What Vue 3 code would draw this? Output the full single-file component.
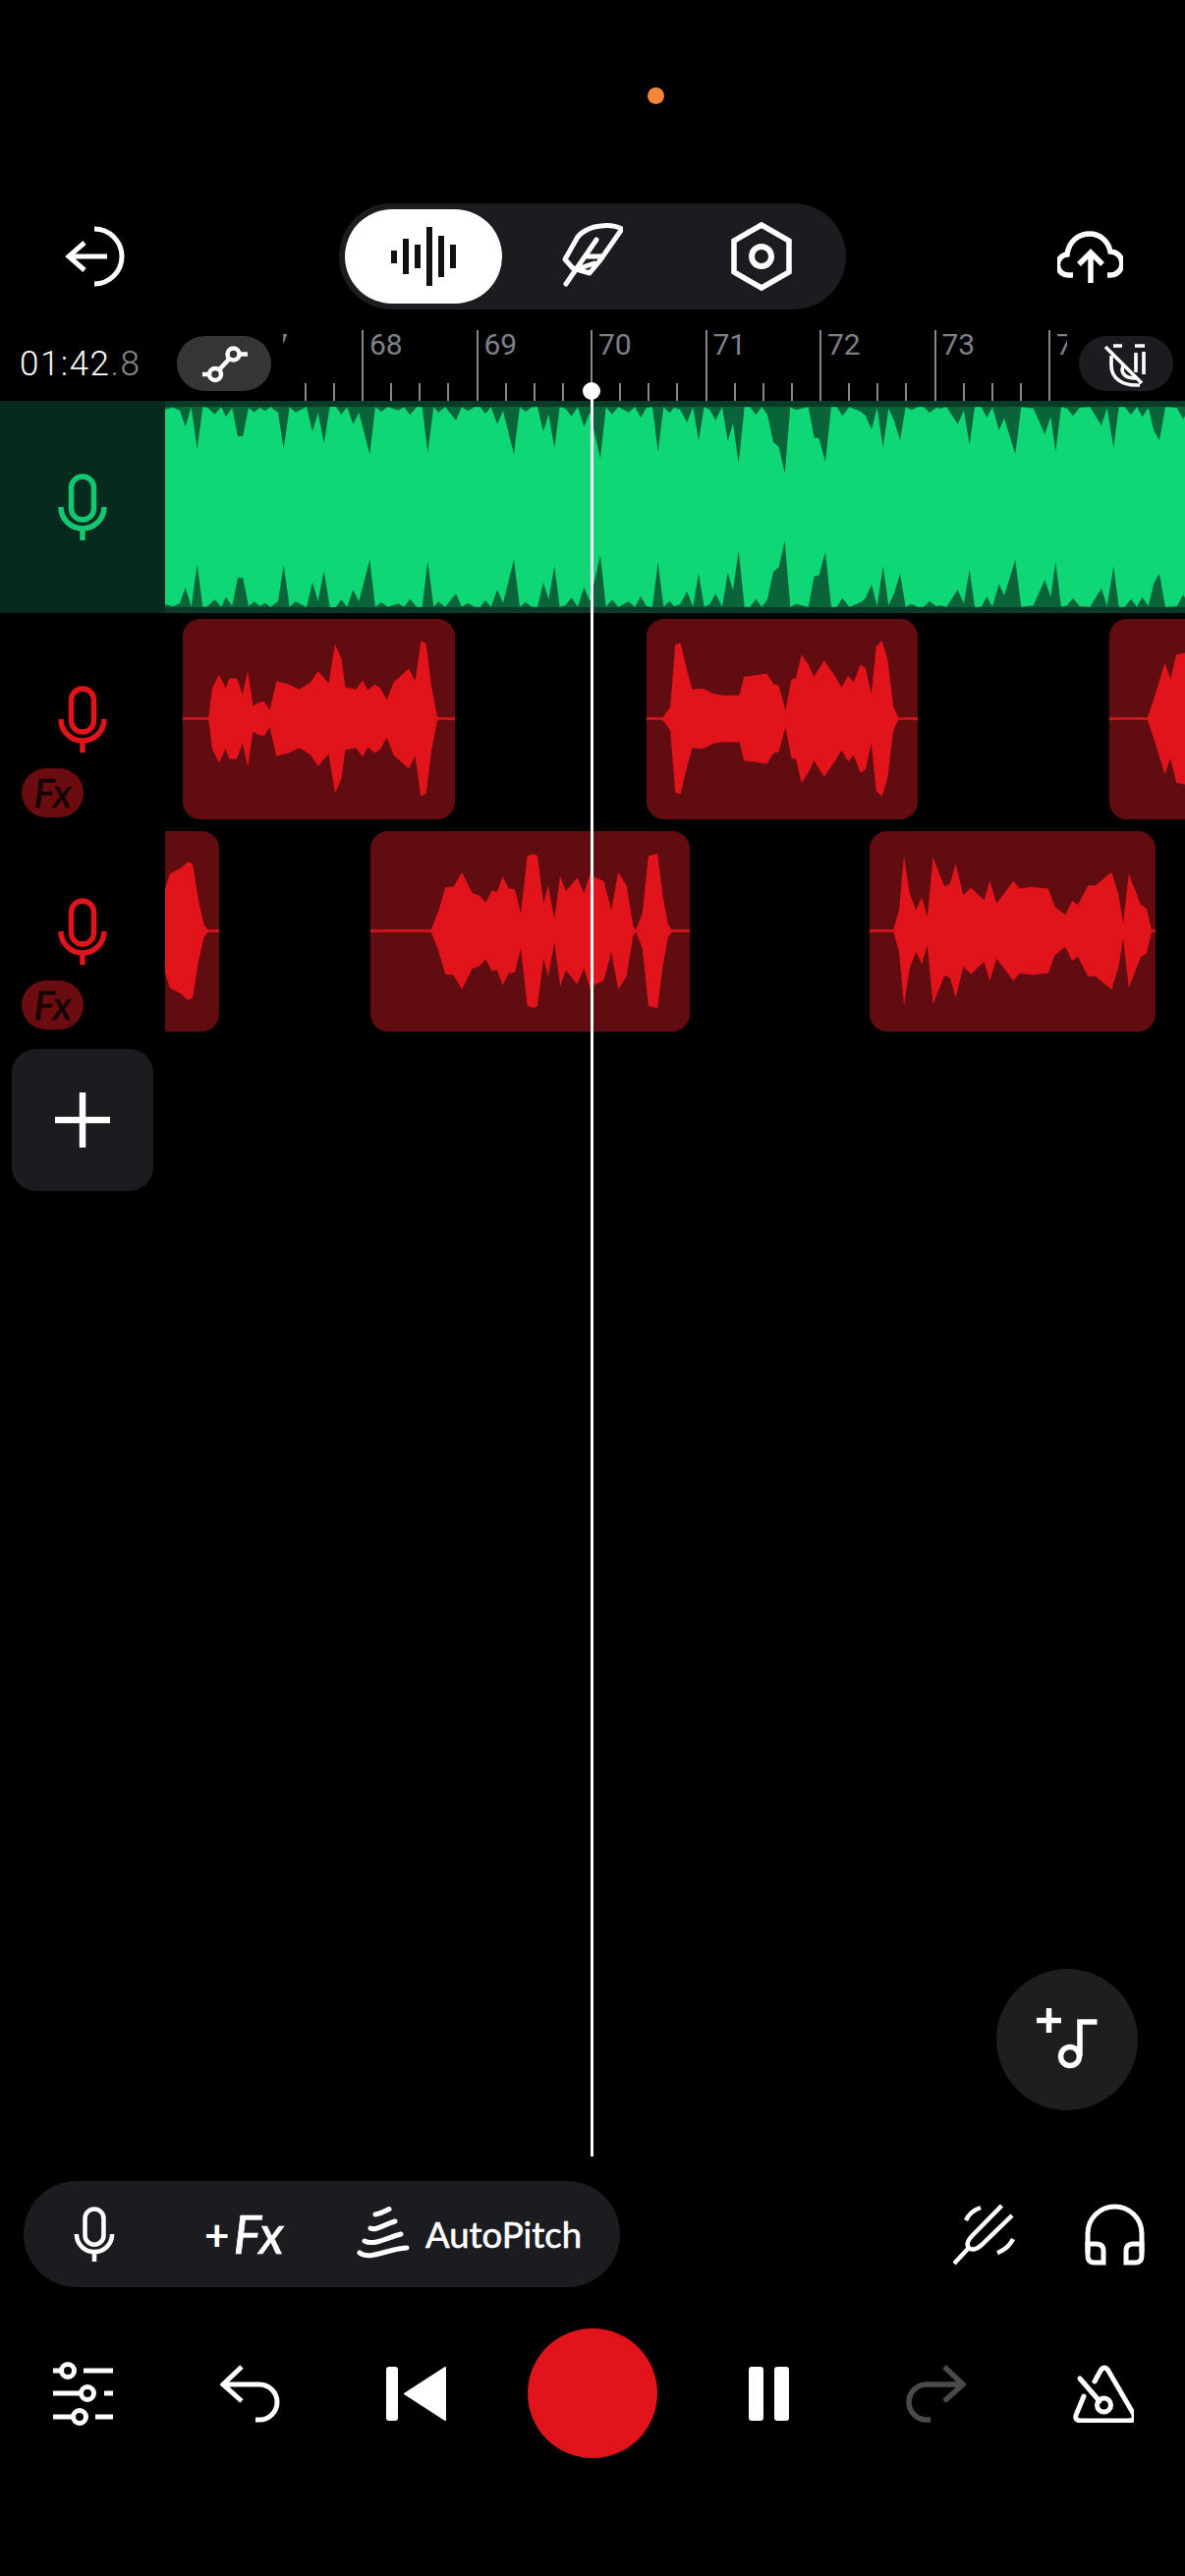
<template>
  <div class="screen">
    <!-- status bar, only the recording dot is visible -->
    <div class="status"><span class="rec-dot"></span></div>

    <header class="topbar">
      <svg class="back" width="62" height="62" viewBox="0 0 62 62" fill="none" stroke="#fff" stroke-width="5">
        <path d="M5 31H44M21 17L5 31L21 45" />
        <path d="M31 3A28 28 0 0 1 31 59" />
      </svg>
      <nav class="seg">
        <div class="tab active">
          <svg width="66" height="60" viewBox="0 0 66 60" fill="#111">
            <rect x="0" y="24" width="6" height="13" />
            <rect x="12" y="12" width="6" height="36" />
            <rect x="24" y="18" width="6" height="24" />
            <rect x="36" y="0" width="6" height="60" />
            <rect x="48" y="9" width="6" height="42" />
            <rect x="60" y="18" width="6" height="24" />
          </svg>
        </div>
        <div class="tab">
          <svg width="62" height="72" viewBox="22 14 62 72" fill="none" stroke="#fff" stroke-width="5" stroke-linecap="round" stroke-linejoin="round">
            <path d="M83 22Q72 16 55 20Q44 23 38 30L25 53L33 62L50 67L60 55Z" />
            <path d="M26 78L57 33M47 50H63M40 62L55 57" />
          </svg>
        </div>
        <div class="tab">
          <svg width="66" height="74" viewBox="0 0 66 74" fill="none" stroke="#fff" stroke-width="5.5">
            <path d="M33 5L61 21V53L33 69L5 53V21Z" />
            <circle cx="33" cy="37" r="10" stroke-width="6" />
          </svg>
        </div>
      </nav>
      <svg class="cloud" width="67" height="54" viewBox="0 0 67 54" fill="none" stroke="#fff" stroke-width="5.5">
        <path d="M16 46H12A10.5 10.5 0 0 1 10 25C12 11 22 4 33 4C44 4 52 12 54 22A12 12 0 0 1 54 46H51" />
        <path d="M34 54V24M22 35L34 23L46 35" />
      </svg>
    </header>

    <div class="rulerbar">
      <div class="time">01:42<span>.8</span></div>
      <div class="pill light">
        <svg width="50" height="40" viewBox="0 0 50 40" fill="none" stroke="#fff" stroke-width="4.5">
          <circle cx="34.5" cy="10.5" r="6" />
          <circle cx="16" cy="31" r="6" />
          <path d="M41 10.5H49M3 31H10M20 26.5L30.5 15" />
        </svg>
      </div>
      <div class="ruler">
        <div class="ruler-inner">
          <div v-for="n in beats" :key="n" class="beat">
            <span class="beat-no">{{ n }}</span>
            <div class="minors"><i></i><i></i><i></i><i></i></div>
          </div>
        </div>
      </div>
      <div class="pill">
        <svg width="52" height="52" viewBox="30 9 52 52" fill="none" stroke="#fff" stroke-width="3.6">
          <path d="M35 18L72 55M43 17H52M65 17H75M66 24V44M74 23V46" />
          <path d="M41 27V37C41 50 52 57 66 57H70M54 36C50 42 52 50 66 50" />
        </svg>
      </div>
    </div>

    <main class="stage">
      <section class="track green">
        <div class="head">
          <svg class="mic" width="50" height="68" viewBox="0 0 50 68" fill="none" stroke="currentColor" stroke-width="5.5">
            <rect x="13.5" y="3" width="23" height="44" rx="11.5" />
            <path d="M3 34A22 22 0 0 0 47 34M25 56V68" />
          </svg>
        </div>
        <div class="lane lane-green">
          <svg class="master" width="1038" height="204" viewBox="0 0 1038 204">
            <path :d="masterPath" fill="#0fd776" />
          </svg>
        </div>
      </section>

      <section v-for="row in redTracks" :key="row.id" class="track">
        <div class="head red">
          <svg class="mic" width="50" height="68" viewBox="0 0 50 68" fill="none" stroke="currentColor" stroke-width="5.5">
            <rect x="13.5" y="3" width="23" height="44" rx="11.5" />
            <path d="M3 34A22 22 0 0 0 47 34M25 56V68" />
          </svg>
          <span class="fx-badge">Fx</span>
        </div>
        <div class="lane">
          <div
            v-for="clip in row.clips"
            :key="clip.left"
            class="clip"
            :style="{ left: clip.left + 'px', width: clip.width + 'px' }"
          >
            <svg :width="clip.width" height="204" :viewBox="`0 0 ${clip.width} 204`">
              <rect x="0" y="100" :width="clip.width" height="3" fill="#c8141a" />
              <path :d="clipPath(clip.peaks)" fill="#e0141a" />
            </svg>
          </div>
        </div>
      </section>

      <button class="add">
        <svg width="58" height="58" viewBox="0 0 58 58" stroke="#fff" stroke-width="6.5">
          <path d="M1 29H57M29 1V57" />
        </svg>
      </button>

      <button class="fab">
        <svg width="144" height="144" viewBox="0 0 144 144" fill="none" stroke="#fff" stroke-width="5.5">
          <path d="M41 52.5H66M53.5 40V65" />
          <path d="M102.5 54H85V89" />
          <circle cx="75" cy="89" r="9.5" />
        </svg>
      </button>
    </main>

    <div class="tools">
      <div class="tool-pill">
        <svg class="tool-mic" width="42" height="56" viewBox="0 0 50 68" fill="none" stroke="#fff" stroke-width="5.5">
          <rect x="13.5" y="3" width="23" height="44" rx="11.5" />
          <path d="M3 34A22 22 0 0 0 47 34M25 56V68" />
        </svg>
        <span class="add-fx"><span>+</span><em>Fx</em></span>
        <svg class="pitch-icon" width="56" height="60" viewBox="12 8 56 60" fill="none" stroke="#fff" stroke-width="5" stroke-linecap="round">
          <path d="M32 18C38 17 41 15 46 12.5" />
          <path d="M27 32C33 35 41 28 52 25" />
          <path d="M21 45C30 50 43 42 58 38" />
          <path d="M16 57C27 65 43 53 64 52" />
        </svg>
        <span class="pitch-label">AutoPitch</span>
      </div>
      <div class="tool-right">
        <svg width="63" height="64" viewBox="0 0 63 64" fill="none" stroke="#fff" stroke-width="4.5">
          <path d="M1 62L15 47M49.5 3L20 33Q12 41 16 46Q21 50 29 43L60 13" />
          <path d="M13 18Q17 9 28 5M45 51Q56 47 61 37" />
        </svg>
        <svg width="61" height="63" viewBox="0 0 61 63" fill="none" stroke="#fff" stroke-width="5">
          <path d="M3 50V30.5A27.5 27.5 0 0 1 58 30.5V50" />
          <path d="M3 41H12Q19 41 19 48V60H10Q3 60 3 53Z" />
          <path d="M58 41H49Q42 41 42 48V60H51Q58 60 58 53Z" />
        </svg>
      </div>
    </div>

    <footer class="transport">
      <svg width="61" height="65" viewBox="0 0 61 65" fill="none" stroke="#fff" stroke-width="5">
        <path d="M0 9H8M31 9H61M0 32H28M52 32H61M0 56H20M43 56H61" />
        <circle cx="15" cy="9" r="6.5" />
        <circle cx="35" cy="32" r="6.5" />
        <circle cx="27" cy="56" r="6.5" />
      </svg>
      <svg width="61" height="60" viewBox="0 0 61 60" fill="none" stroke="#fff" stroke-width="5">
        <path d="M22 3L3 21L22 38M3 21H40A18 18 0 0 1 40 57H36" />
      </svg>
      <svg width="61" height="55" viewBox="0 0 61 55" fill="#fff" stroke="#fff" stroke-width="2" stroke-linejoin="round">
        <rect x="1" y="1" width="10" height="53" rx="2" />
        <path d="M19 27.5L60 1V54Z" />
      </svg>
      <button class="record"></button>
      <svg width="41" height="55" viewBox="0 0 41 55" fill="#fff">
        <rect x="0" y="0" width="15" height="55" rx="3" />
        <rect x="26" y="0" width="15" height="55" rx="3" />
      </svg>
      <svg width="61" height="60" viewBox="0 0 61 60" fill="none" stroke="#4a4a4a" stroke-width="5.5">
        <path d="M39 3L58 21L39 38M58 21H21A18 18 0 0 0 21 57H25" />
      </svg>
      <svg width="62" height="60" viewBox="10 10 62 60" fill="none" stroke="#fff" stroke-width="5" stroke-linecap="round">
        <path d="M21 43L14 60Q10 68 19 68H66Q75 68 71 60L46 17Q42 11 38 17L32 28" />
        <path d="M17 25L37 48" />
        <circle cx="41.5" cy="52" r="7" />
      </svg>
    </footer>

    <div class="playhead"><span class="playhead-dot"></span></div>
  </div>
</template>

<script setup>
const beats = [67, 68, 69, 70, 71, 72, 73, 74];

// top edge of the green master take, read off the screenshot in 3x pixels
const masterLeft = [0,35,25,30,45,38,62,88,80,28,98,158,115,28,130,30,152,50,172,28,186,58,205,30,222,118,238,116,255,30,272,44,290,30,305,40,322,28,345,45,362,156,380,28,398,44,432,27,450,103,467,45,485,138,503,27,522,27,538,50,556,28,574,80,592,45,625,172,642,28,660,42,680,28,712,38,730,28,748,52,768,28,785,28,802,168,820,28,835,44,855,28,888,68,906,28,925,40,945,28,962,28,978,48,995,28,1014,80,1032,40,1065,172,1083,28,1100,42,1120,28,1137,28,1155,103,1171,50,1189,152,1205,28,1222,32,1241,56,1260,28,1279,88,1297,45,1329,185,1346,28,1365,50,1384,28,1415,44,1435,28,1452,60,1470,30,1488,28,1505,165,1522,28,1540,46];
const masterRight = [0,30,18,35,40,75,58,28,75,130,92,28,108,35,127,68,147,28,164,132,180,78,197,200,215,28,232,28,250,52,268,28,285,50,303,135,320,150,338,230,355,28,372,37,410,28,428,122,442,122,462,195,480,28,497,28,514,55,535,28,570,42,585,55,603,97,620,30,638,152,655,32,672,70,690,130,707,28,725,37,745,28,762,28,780,45,800,30,815,32,832,28,866,80,885,38,902,143,918,28,938,28,955,60,972,28,992,98,1008,62,1042,172,1060,28,1097,32,1132,110,1150,58,1165,165,1182,28,1200,32,1218,55,1238,30,1270,28,1305,85,1322,30,1342,152,1358,28,1376,28,1395,52,1413,28,1430,58,1448,30,1465,100,1482,130,1500,28,1535,30,1555,65,1560,55];

const masterPoints = [];
for (let i = 0; i < masterLeft.length; i += 2) masterPoints.push([masterLeft[i] / 3, (masterLeft[i + 1] - 27) / 3]);
for (let i = 0; i < masterRight.length; i += 2) masterPoints.push([518 + masterRight[i] / 3, (masterRight[i + 1] - 27) / 3]);

const masterPath =
  'M' + masterPoints.map((p) => `${p[0].toFixed(1)} ${p[1].toFixed(1)}`).join('L') +
  'L' + [...masterPoints].reverse().map((p) => `${p[0].toFixed(1)} ${(204 - p[1]).toFixed(1)}`).join('L') + 'Z';

// turn zoomed [x, y] pairs into [px from clip start, amplitude in px]
const peaks = (raw, x0, mid, sy, shift = 0) => {
  const out = [];
  for (let i = 0; i < raw.length; i += 2) out.push([(raw[i] - x0) / 2.6 + shift, (mid - raw[i + 1]) / sy]);
  return out;
};

const clipPath = (list) => {
  const mid = 101.5;
  const top = list.map((p) => `${p[0].toFixed(1)} ${(mid - p[1]).toFixed(1)}`);
  const bottom = [...list].reverse().map((p) => `${p[0].toFixed(1)} ${(mid + p[1]).toFixed(1)}`);
  return 'M' + top.concat(bottom).join('L') + 'Z';
};

const redTracks = [
  {
    id: 1,
    clips: [
      {
        left: 17.5,
        width: 277.5,
        peaks: peaks([550,300,560,225,578,190,595,225,605,200,625,200,640,240,654,180,668,270,680,262,697,258,712,280,730,207,762,215,790,228,820,210,840,182,868,212,885,113,902,150,912,222,940,228,958,205,972,230,990,215,1005,225,1022,255,1040,210,1080,175,1097,207,1112,105,1126,112,1140,220,1155,295,1160,300], 482, 302, 2.49),
      },
      {
        left: 490,
        width: 276,
        peaks: peaks([185,362,205,330,218,140,232,135,245,200,263,277,290,274,320,290,345,295,360,295,388,295,400,238,440,232,460,228,478,260,492,265,510,340,525,245,537,243,552,170,570,200,585,238,612,188,640,235,658,270,675,235,690,255,708,200,722,212,737,290,750,145,765,128,780,185,795,330,808,362], 142, 366, 3),
      },
      {
        left: 961,
        width: 275,
        peaks: peaks([1468,365,1490,290,1515,195,1530,245,1545,170,1568,165,1600,165], 1368, 366, 3),
      },
    ],
  },
  {
    id: 2,
    clips: [
      {
        left: -20,
        width: 75,
        peaks: peaks([437,735,450,695,480,680,497,665,510,670,525,760,540,825,552,838], 437, 840, 2.49, 20),
      },
      {
        left: 209,
        width: 325,
        peaks: [
          ...peaks([1140,838,1160,790,1178,730,1200,728,1222,692,1250,745,1268,750,1285,768,1302,738,1315,742,1330,702,1345,732,1362,735,1378,795,1395,650,1413,645,1422,650,1438,770,1450,725,1467,810,1482,700,1497,740,1527,705,1545,745,1563,690], 980, 840, 2.49),
          ...peaks([3,848,30,862,50,950,68,835,90,875,108,1000,115,1010,132,960,148,785,172,778,185,900,200,995,210,1010], 0, 1014, 3, 226),
        ],
      },
      {
        left: 717,
        width: 291,
        peaks: peaks([795,1010,810,950,823,785,838,900,855,950,870,912,885,970,900,790,930,878,945,870,960,810,980,905,1000,882,1035,920,1050,860,1068,930,1112,862,1130,885,1160,880,1205,885,1222,940,1250,965,1268,922,1283,935,1310,875,1330,875,1372,835,1390,900,1403,990,1418,840,1450,935,1465,945,1478,1010], 732, 1014, 3),
      },
    ],
  },
];
</script>

<style scoped>
.screen {
  position: relative;
  width: 1206px;
  height: 2622px;
  background: #000;
  overflow: hidden;
  display: flex;
  flex-direction: column;
  font-family: "Roboto", sans-serif;
  color: #fff;
}

button {
  border: none;
  padding: 0;
  cursor: pointer;
}

.status {
  height: 207px;
  padding: 89px 0 0 659px;
  box-sizing: border-box;
}

.rec-dot {
  display: block;
  width: 17px;
  height: 17px;
  border-radius: 50%;
  background: #f5873a;
}

.topbar {
  height: 108px;
  display: flex;
  align-items: center;
  padding-left: 65px;
}

.back {
  margin-right: 218px;
}

.seg {
  display: flex;
  width: 516px;
  height: 108px;
  border-radius: 54px;
  background: #1b1c1f;
}

.tab {
  width: 172px;
  height: 108px;
  display: flex;
  align-items: center;
  justify-content: center;
}

.tab.active {
  background: #fff;
  background-clip: content-box;
  box-sizing: border-box;
  padding: 6px;
  border-radius: 54px;
}

.cloud {
  margin-left: 215px;
}

.rulerbar {
  height: 93px;
  display: flex;
  align-items: flex-end;
  padding-left: 20px;
}

.time {
  width: 160px;
  flex: none;
  align-self: flex-start;
  margin-top: 37px;
  font-size: 35px;
  line-height: 38px;
  font-weight: 300;
  letter-spacing: 1.5px;
}

.time span {
  color: #8a8a8a;
}

.pill {
  width: 96px;
  height: 56px;
  flex: none;
  margin-bottom: 10px;
  border-radius: 28px;
  background: #1b1c1f;
  display: flex;
  align-items: center;
  justify-content: center;
}

.pill.light {
  background: #353535;
}

.ruler {
  width: 798px;
  height: 72px;
  flex: none;
  margin: 0 12px;
  overflow: hidden;
}

.ruler-inner {
  display: flex;
  margin-left: -36.5px;
}

.beat {
  width: 116.5px;
  height: 72px;
  flex: none;
  box-sizing: border-box;
  border-left: 2px solid #85878d;
  display: flex;
  flex-direction: column;
  justify-content: space-between;
}

.beat-no {
  padding-left: 6px;
  font-size: 30px;
  line-height: 30px;
  color: #7d8087;
}

.minors {
  display: flex;
  height: 18px;
}

.minors i {
  width: 29.125px;
  flex: none;
  box-sizing: border-box;
  border-left: 2px solid #85878d;
}

.minors i:first-child {
  border-left: none;
  width: 27.125px;
}

.stage {
  position: relative;
  flex: 1;
  display: flex;
  flex-direction: column;
}

.track {
  height: 216px;
  flex: none;
  display: flex;
}

.head {
  width: 168px;
  flex: none;
  box-sizing: border-box;
  padding-top: 74px;
  display: flex;
  flex-direction: column;
  align-items: center;
}

.green .head {
  background: #062b1e;
  color: #12c870;
}

.head.red {
  color: #e0141a;
}

.fx-badge {
  align-self: flex-start;
  width: 63px;
  height: 50px;
  margin: 16px 0 0 22px;
  border-radius: 25px;
  background: #6b0d10;
  color: #120202;
  font-family: "Lato", sans-serif;
  font-style: italic;
  font-size: 40px;
  line-height: 50px;
  text-align: center;
  -webkit-text-stroke: 0.6px #120202;
}

.lane {
  position: relative;
  flex: 1;
  overflow: hidden;
}

.lane-green {
  background: #0b3a2a;
  padding: 6px 0;
}

.master {
  display: block;
  background: #0a6439;
}

.clip {
  position: absolute;
  top: 6px;
  height: 204px;
  border-radius: 18px;
  background: #610c10;
  overflow: hidden;
}

.clip svg {
  display: block;
}

.add {
  width: 144px;
  height: 144px;
  margin: 12px 0 0 12px;
  border-radius: 24px;
  background: #1b1c1f;
  display: flex;
  align-items: center;
  justify-content: center;
}

.fab {
  align-self: flex-end;
  width: 144px;
  height: 144px;
  margin: auto 48px 72px 0;
  border-radius: 50%;
  background: #1c1e20;
}

.fab svg {
  display: block;
}

.tools {
  height: 108px;
  flex: none;
  display: flex;
  align-items: center;
  justify-content: space-between;
  padding: 0 41px 0 24px;
}

.tool-pill {
  width: 607px;
  height: 108px;
  box-sizing: border-box;
  padding-left: 51px;
  border-radius: 54px;
  background: #1b1c1f;
  display: flex;
  align-items: center;
}

.add-fx {
  margin-left: 91px;
  display: flex;
  align-items: center;
  gap: 4px;
  width: 85px;
  font-family: "Lato", sans-serif;
}

.add-fx span {
  font-size: 44px;
  line-height: 50px;
  font-weight: 700;
}

.add-fx em {
  font-size: 54px;
  line-height: 50px;
  -webkit-text-stroke: 0.7px #fff;
}

.pitch-icon {
  margin-left: 69px;
}

.pitch-label {
  margin-left: 15px;
  font-family: "Lato", sans-serif;
  font-size: 36.5px;
  line-height: 40px;
  -webkit-text-stroke: 0.6px #fff;
}

.tool-right {
  display: flex;
  align-items: center;
  gap: 71px;
}

.transport {
  margin-top: 42px;
  height: 132px;
  margin-bottom: 120px;
  flex: none;
  display: grid;
  grid-template-columns: repeat(3, 169.5px) 189px repeat(3, 170px);
  align-items: center;
  justify-items: center;
}

.record {
  width: 132px;
  height: 132px;
  border-radius: 50%;
  background: #e0141a;
}

.playhead {
  position: absolute;
  left: 600.5px;
  top: 398px;
  width: 3px;
  height: 1797px;
  background: #fff;
}

.playhead-dot {
  position: absolute;
  left: -7.5px;
  top: -9px;
  width: 18px;
  height: 18px;
  border-radius: 50%;
  background: #fff;
}
</style>

<style>
html,
body {
  background: #000;
}
</style>
